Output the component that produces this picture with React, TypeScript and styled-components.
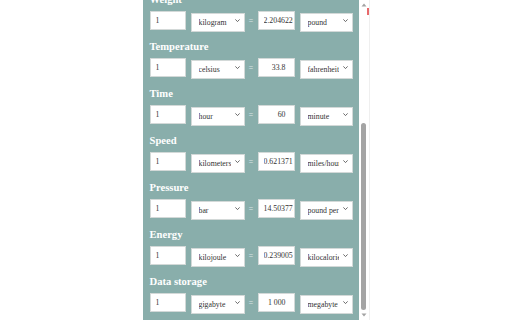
import React, { useLayoutEffect, useRef, useState } from "react";
import styled, { createGlobalStyle } from "styled-components";

const GlobalStyle = createGlobalStyle`
  html, body { margin: 0; padding: 0; background: #ffffff; }
  body { font-family: "Liberation Serif", "Times New Roman", serif; }
`;

const Page = styled.div`
  display: flex;
  justify-content: center;
  width: 512px;
  height: 320px;
  overflow: hidden;
`;

const Popup = styled.div`
  position: relative;
  display: flex;
  width: 227px;
  height: 320px;
`;

const Viewport = styled.div`
  flex: 1;
  height: 320px;
  overflow-y: scroll;
  background: #89aeab;
  scrollbar-width: none;
  &::-webkit-scrollbar {
    display: none;
  }
`;

const ScrollBar = styled.div`
  display: flex;
  flex-direction: column;
  width: 11px;
  height: 320px;
  background: #ffffff;
  box-sizing: border-box;
  border-right: 1px solid #efefef;
`;

const ArrowButton = styled.svg`
  display: block;
  width: 10px;
  height: 10px;
  flex: none;
`;

const Track = styled.div`
  position: relative;
  flex: 1;
`;

const Thumb = styled.div`
  position: absolute;
  left: 2px;
  width: 5px;
  border-radius: 3px;
  background: #a4a4a4;
`;

const Mark = styled.span`
  position: absolute;
  right: 1px;
  top: 8px;
  width: 2px;
  height: 7px;
  background: #e8696b;
`;

const Content = styled.div`
  padding: 10px 6px 8px 7px;
`;

const Title = styled.h1`
  margin: 8px 0 4px;
  font-size: 13px;
  line-height: 16px;
  font-weight: bold;
  color: #ffffff;
`;

const Heading = styled.h2`
  margin: 10px 0 5px;
  font-size: 10.6px;
  line-height: 13px;
  font-weight: bold;
  color: #ffffff;
`;

const Row = styled.div`
  display: flex;
  align-items: center;
  height: 19px;
`;

const Field = styled.input<{ $w: number; $right?: boolean; $long?: boolean }>`
  box-sizing: border-box;
  width: ${(p) => p.$w}px;
  height: 19px;
  margin: 0;
  border: 1px solid #d3d9d8;
  background: #ffffff;
  color: #333333;
  font-family: "Liberation Serif", "Times New Roman", serif;
  font-size: 7.8px;
  padding: ${(p) => (p.$right ? (p.$long ? "0 1px 0 5px" : "0 8px 0 5px") : "0 4px 0 5px")};
  text-align: ${(p) => (p.$right && !p.$long ? "right" : "left")};
  outline: none;
  border-radius: 0;
`;

const SelectWrap = styled.div<{ $w: number; $ml: number }>`
  position: relative;
  width: ${(p) => p.$w}px;
  height: 19px;
  margin-left: ${(p) => p.$ml}px;
`;

const Select = styled.select`
  box-sizing: border-box;
  appearance: none;
  -webkit-appearance: none;
  width: 100%;
  height: 19px;
  margin: 0;
  border: 1px solid #d3d9d8;
  border-radius: 0;
  background: #ffffff;
  color: #333333;
  font-family: "Liberation Serif", "Times New Roman", serif;
  font-size: 7.8px;
  padding: 0 13px 0 7px;
  outline: none;
`;

const Chevron = styled.svg`
  position: absolute;
  right: 5px;
  top: 8px;
  width: 5px;
  height: 3px;
  pointer-events: none;
`;

const Equals = styled.span`
  width: 13px;
  text-align: center;
  color: #dde7e6;
  font-size: 7.5px;
  line-height: 19px;
  font-family: "Liberation Sans", Arial, sans-serif;
`;

type Conv = { name: string; from: string; to: string; result: string };

const data: Conv[] = [
  { name: "Length", from: "meter", to: "foot", result: "3.280839895" },
  { name: "Area", from: "square meter", to: "square foot", result: "10.76391042" },
  { name: "Volume", from: "liter", to: "gallon", result: "0.264172052" },
  { name: "Weight", from: "kilogram", to: "pound", result: "2.2046226218" },
  { name: "Temperature", from: "celsius", to: "fahrenheit", result: "33.8" },
  { name: "Time", from: "hour", to: "minute", result: "60" },
  { name: "Speed", from: "kilometers per hour", to: "miles/hour", result: "0.6213711922" },
  { name: "Pressure", from: "bar", to: "pound per square inch", result: "14.503773773" },
  { name: "Energy", from: "kilojoule", to: "kilocalorie", result: "0.2390057361" },
  { name: "Data storage", from: "gigabyte", to: "megabyte", result: "1 000" },
];

const ChevronIcon = () => (
  <Chevron viewBox="0 0 5 3">
    <path d="M0.4 0.4 L2.5 2.6 L4.6 0.4" fill="none" stroke="#5a5a5a" strokeWidth="0.9" />
  </Chevron>
);

const UnitSelect = ({ w, ml, value }: { w: number; ml: number; value: string }) => (
  <SelectWrap $w={w} $ml={ml}>
    <Select defaultValue={value}>
      <option value={value}>{value}</option>
    </Select>
    <ChevronIcon />
  </SelectWrap>
);

export default function App() {
  const ref = useRef<HTMLDivElement>(null);
  const [thumb, setThumb] = useState({ top: 0, height: 0 });
  useLayoutEffect(() => {
    const el = ref.current;
    if (!el) return;
    el.scrollTop = el.scrollHeight;
    const track = 300;
    const h = (el.clientHeight / el.scrollHeight) * track;
    const t = (el.scrollTop / el.scrollHeight) * track;
    setThumb({ top: t, height: h });
  }, []);
  return (
    <>
      <GlobalStyle />
      <Page>
        <Popup>
          <Viewport ref={ref}>
            <Content>
              <Title>Unit converter</Title>
              {data.map((c) => (
                <section key={c.name}>
                  <Heading>{c.name}</Heading>
                  <Row>
                    <Field $w={36} defaultValue="1" />
                    <UnitSelect w={54} ml={5} value={c.from} />
                    <Equals>=</Equals>
                    <Field $w={37} $right $long={c.result.length > 7} readOnly value={c.result} />
                    <UnitSelect w={53} ml={5} value={c.to} />
                  </Row>
                </section>
              ))}
            </Content>
          </Viewport>
          <ScrollBar>
            <ArrowButton viewBox="0 0 10 10">
              <path d="M2.5 6.5 L5 3.5 L7.5 6.5 Z" fill="#a3a3a3" />
            </ArrowButton>
            <Track>
              <Thumb style={{ top: thumb.top, height: thumb.height }} />
            </Track>
            <ArrowButton viewBox="0 0 10 10">
              <path d="M2.5 3.5 L5 6.5 L7.5 3.5 Z" fill="#a3a3a3" />
            </ArrowButton>
          </ScrollBar>
          <Mark />
        </Popup>
      </Page>
    </>
  );
}
